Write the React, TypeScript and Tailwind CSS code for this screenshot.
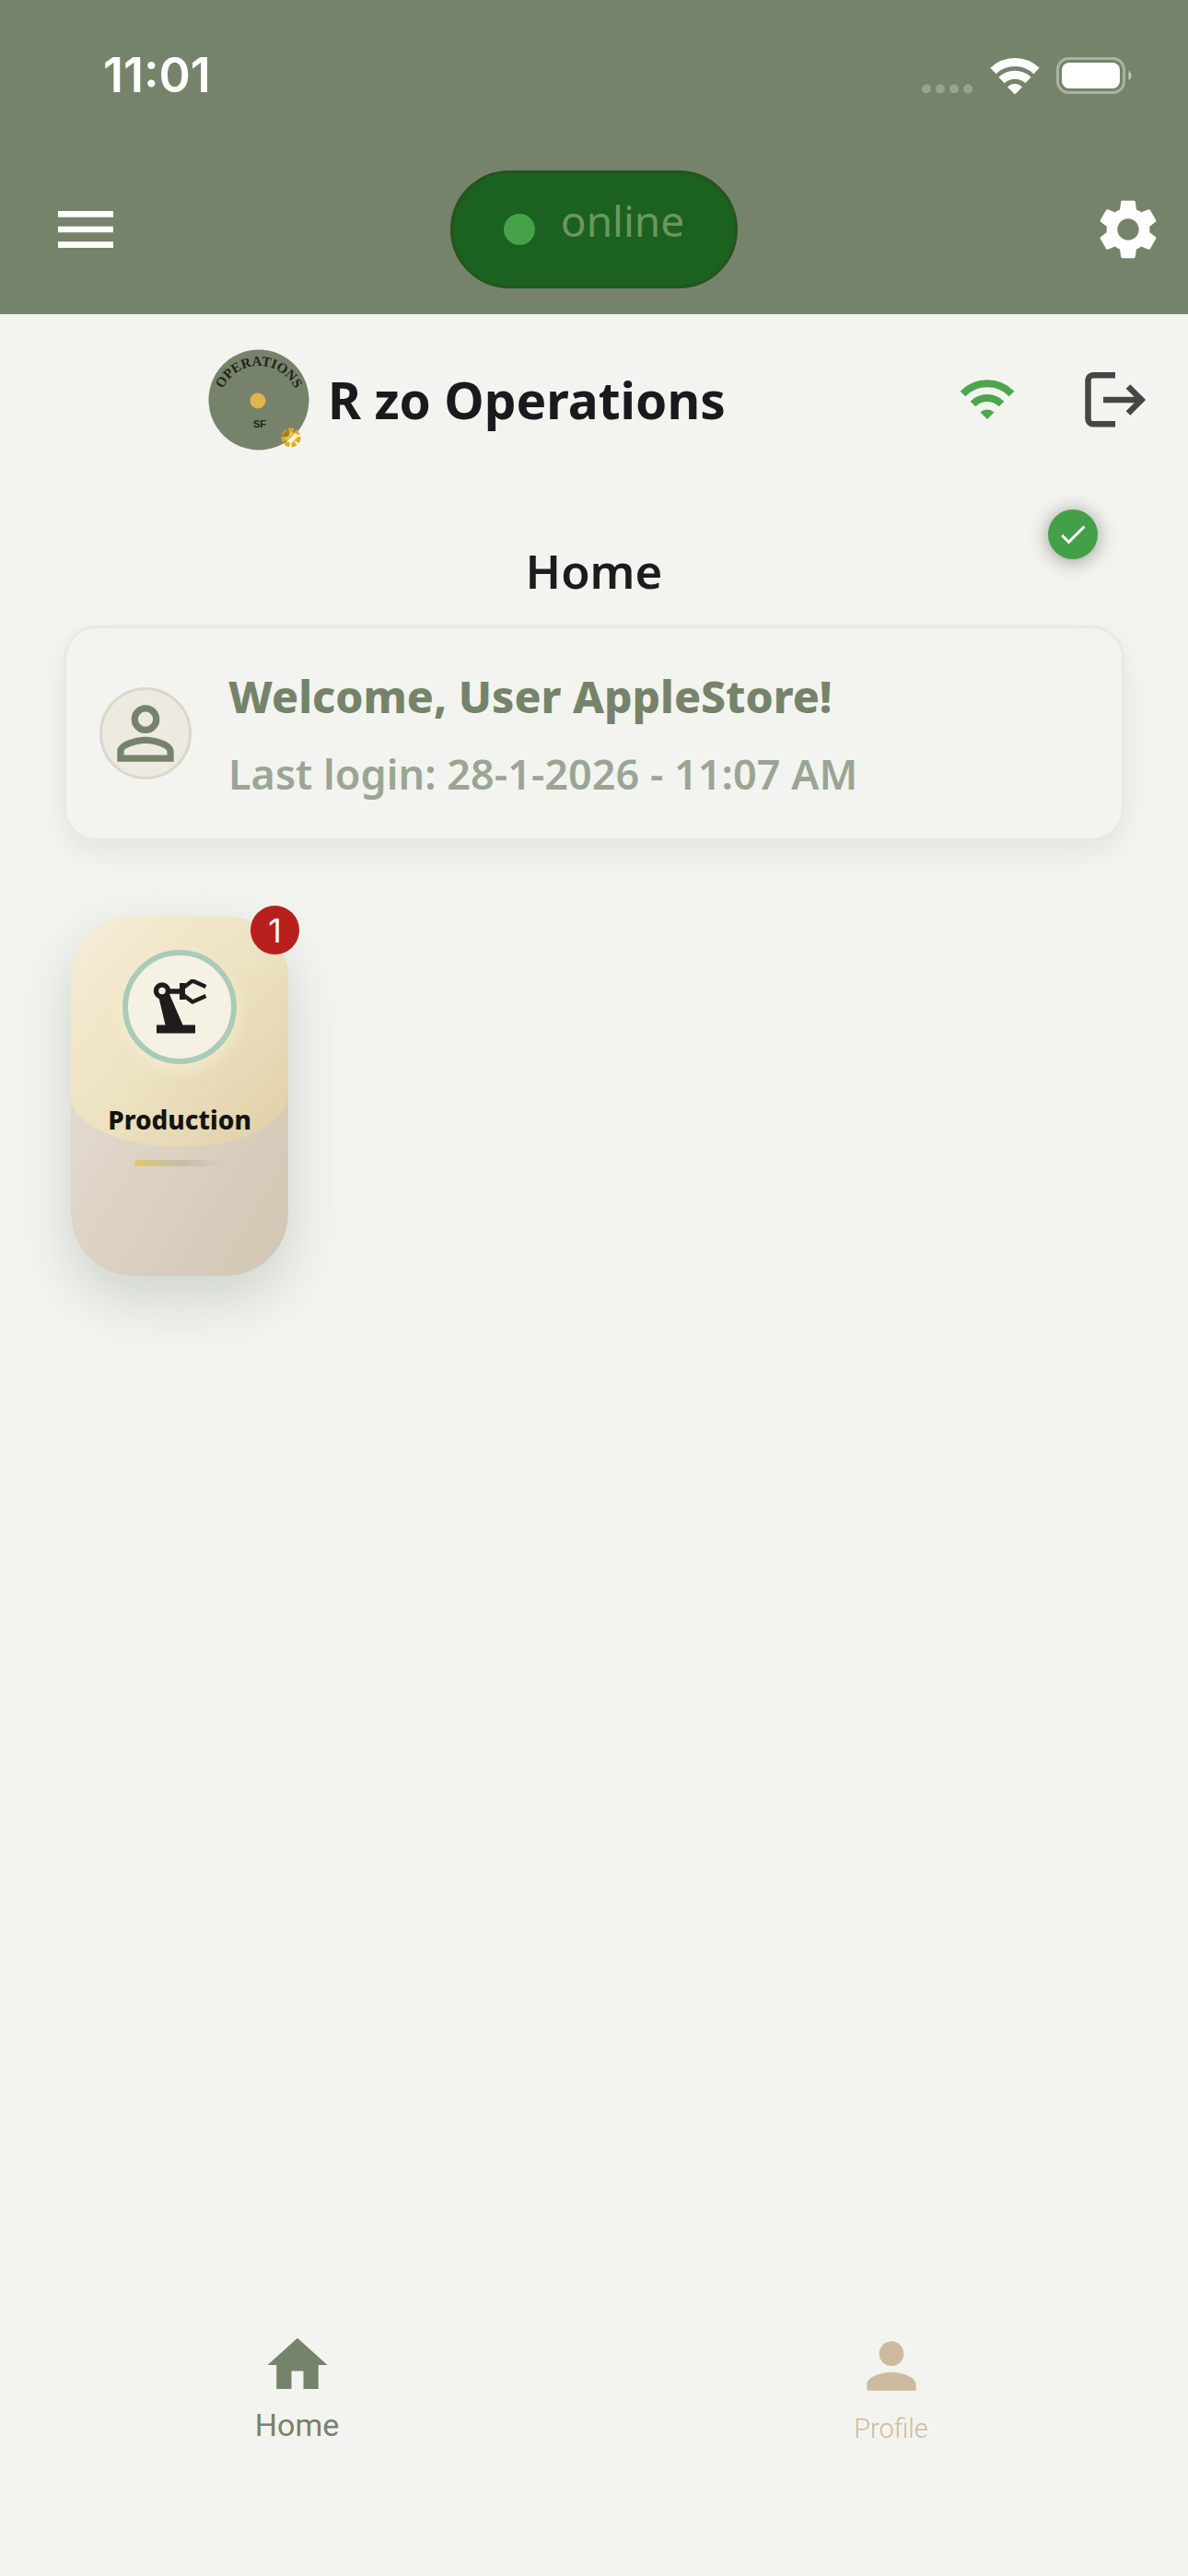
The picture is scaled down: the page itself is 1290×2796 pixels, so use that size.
import { MdCheck, MdHome, MdMenu, MdPerson, MdPersonOutline, MdSettings } from "react-icons/md";

const tiles = [{ title: "Production", badge: 1, icon: RobotArmIcon }];

function StatusBar() {
  return (
    <div className="flex h-[156px] items-center justify-between pt-2 pr-[58px] pl-28 text-white">
      <span className="font-['Inter',sans-serif] text-[52px] leading-none font-semibold">11:01</span>
      <div className="flex items-center gap-4">
        <svg viewBox="0 0 58 42" className="h-[42px] w-[58px]" fill="#97a28f" aria-hidden>
          <circle cx="6" cy="35.500" r="5" />
          <circle cx="21" cy="35.500" r="5" />
          <circle cx="36" cy="35.500" r="5" />
          <circle cx="51" cy="35.500" r="5" />
        </svg>
        <svg viewBox="0 0 56 42" className="h-[42px] w-14" fill="none" stroke="white" aria-hidden>
          <path d="M4.500 16A34 34 0 0 1 51.500 16" strokeWidth="9" />
          <path d="M13.500 26A21 21 0 0 1 42.500 26" strokeWidth="9" />
          <path d="M28 41.500 20 33.500A11 11 0 0 1 36 33.500Z" fill="white" stroke="none" />
        </svg>
        <svg viewBox="0 0 86 42" className="h-[42px] w-[86px]" fill="none" aria-hidden>
          <rect x="2.500" y="2.500" width="72" height="37" rx="12" stroke="#a9b3a2" strokeWidth="3" />
          <rect x="7" y="7" width="63" height="28" rx="8" fill="white" />
          <path d="M79.500 16c4 2 4 8 0 10z" fill="#c3cabd" />
        </svg>
      </div>
    </div>
  );
}

function Logo() {
  return (
    <svg viewBox="0 0 110 110" className="size-[110px]" role="img" aria-label="R zo Operations logo">
      <defs>
        <path id="logo-arc" d="M14 48A43 43 0 0 1 96 48" />
      </defs>
      <circle cx="55" cy="55" r="54.500" fill="#77826a" />
      <text fill="#20241c" fontFamily="Liberation Serif, serif" fontWeight="700" fontSize="15">
        <textPath href="#logo-arc" startOffset="50%" textAnchor="middle">
          OPERATIONS
        </textPath>
      </text>
      <circle cx="54" cy="56" r="8.500" fill="#e3b34c" />
      <text x="56" y="85" textAnchor="middle" fill="#20241c" fontFamily="Liberation Sans, sans-serif" fontWeight="700" fontSize="11">
        SF
      </text>
      <circle cx="90" cy="96" r="8" fill="none" stroke="#d9ae2b" strokeWidth="5" strokeDasharray="5 2" />
      <circle cx="90" cy="96" r="6" fill="#e6c04a" />
      <path d="M86 100l9-9 3 3-8 8z" fill="#fbf3d8" />
      <circle cx="85" cy="92" r="3" fill="#a77c12" />
    </svg>
  );
}

function WifiIcon() {
  return (
    <svg viewBox="0 0 60 44" className="h-11 w-15" fill="none" stroke="#4ba64e" strokeWidth="8" aria-hidden>
      <path d="M3.500 15.500A37 37 0 0 1 56.500 15.500" />
      <path d="M14.500 26.500A22 22 0 0 1 45.500 26.500" />
      <path d="M30 43 22.500 35.500A11 11 0 0 1 37.500 35.500Z" fill="#4ba64e" stroke="none" />
    </svg>
  );
}

function LogoutIcon() {
  return (
    <svg viewBox="0 0 80 80" className="size-20" fill="none" stroke="#464646" strokeWidth="6.500" aria-hidden>
      <path d="M41 13.300H17a5.500 5.500 0 0 0-5.500 5.500v42a5.500 5.500 0 0 0 5.500 5.500h24" />
      <path d="M28 40h43" />
      <path d="M55 25.500 69.500 40 55 54.500" />
    </svg>
  );
}

function RobotArmIcon() {
  return (
    <svg viewBox="15 23 60 60" className="size-15" fill="#1f1c1c" stroke="#1f1c1c" aria-hidden>
      <path d="M22 41 34 39 48.500 72.500H62V81.500H20V72.500H29.500Z" stroke="none" />
      <circle cx="26" cy="35.500" r="6.500" fill="#f5f1e3" strokeWidth="5.500" />
      <path d="M34 36H47" strokeWidth="5.500" />
      <path d="M45 27H51V45H45Z" stroke="none" />
      <path d="M49 32 59 24.500 73.500 31M49 40 59 47.500 73.500 41" fill="none" strokeWidth="4.500" />
    </svg>
  );
}

export default function App() {
  return (
    <div className="flex min-h-screen flex-col bg-[#f3f4ef] font-['Noto_Sans',sans-serif]">
      <header className="bg-[#76836b]">
        <StatusBar />
        <div className="grid h-[185px] grid-cols-3 items-center px-[26px] text-white">
          <button type="button" aria-label="Menu" className="ml-[27px] justify-self-start">
            <MdMenu className="size-20" />
          </button>
          <div className="flex h-32 w-[312px] items-center justify-center gap-7 justify-self-center rounded-full border-3 border-[#25541f] bg-[#1b611f]">
            <span className="size-[34px] rounded-full bg-[#45a249]" />
            <span className="pb-5 text-[46px] leading-[60px] text-[#6b965f]">online</span>
          </div>
          <button type="button" aria-label="Settings" className="justify-self-end">
            <MdSettings className="size-[78px]" />
          </button>
        </div>
      </header>

      <main className="relative flex flex-1 flex-col">
        <div className="flex h-[186px] items-center justify-between pr-10 pl-[226px]">
          <div className="flex items-center gap-5">
            <Logo />
            <h1 className="text-[55px] leading-[72px] font-bold text-[#1a1a1e]">R zo Operations</h1>
          </div>
          <div className="flex items-center gap-17">
            <WifiIcon />
            <button type="button" aria-label="Log out">
              <LogoutIcon />
            </button>
          </div>
        </div>

        <div className="absolute top-[212px] right-[98px] flex size-[54px] items-center justify-center rounded-full bg-[#43a047] shadow-[0_2px_20px_rgba(60,60,50,0.5)]">
          <MdCheck className="size-9 text-white" />
        </div>

        <h2 className="mt-14 text-center text-[51px] leading-[72px] font-semibold text-[#1c1c1e]">Home</h2>

        <section className="mx-[69px] mt-6 flex h-[234px] items-center gap-10 rounded-[36px] border-3 border-[#e8e9e2] px-9 shadow-[0_12px_28px_rgba(117,130,106,0.12)]">
          <div className="flex size-[100px] items-center justify-center rounded-full border-3 border-[#d9d8cd] bg-[#edeae1]">
            <MdPersonOutline className="size-[92px] shrink-0 text-[#76836b]" />
          </div>
          <div className="flex flex-col gap-4 pt-1">
            <p className="text-[48px] leading-[68px] font-extrabold text-[#76836b]">Welcome, User AppleStore!</p>
            <p className="text-[45px] leading-[68px] font-semibold text-[#9ba595]">Last login: 28-1-2026 - 11:07 AM</p>
          </div>
        </section>

        <div className="flex flex-wrap gap-10 px-[77px] pt-[82px]">
          {tiles.map((tile) => (
            <a key={tile.title} href="#production" className="relative">
              <div className="relative h-[390px] w-[236px] overflow-hidden rounded-[68px] bg-gradient-to-br from-[#eae2db] via-[#dcd3c4] to-[#d2c5b2] shadow-[0_24px_60px_rgba(90,115,100,0.25)]">
                <div className="absolute inset-x-0 top-0 h-[250px] rounded-b-[50%_56px] bg-gradient-to-br from-[#f6edd7] via-[#ede2c2] to-[#dfcfa7]" />
                <div className="relative flex flex-col items-center pt-9">
                  <div className="flex size-[124px] items-center justify-center rounded-full border-6 border-[#abcbb9] bg-[#f5f1e3] shadow-[0_6px_20px_rgba(255,250,225,0.5)]">
                    <tile.icon />
                  </div>
                  <p className="mt-10 text-[28px] leading-10 font-extrabold text-[#15130f]">{tile.title}</p>
                  <span className="mt-6 h-[7px] w-[98px] rounded-full bg-gradient-to-r from-[#dccb6c] via-[#c6bda6] to-transparent" />
                </div>
              </div>
              <span className="absolute -top-3 -right-3 flex size-[53px] items-center justify-center rounded-full bg-[#b8201e] font-['Inter',sans-serif] text-4xl text-white">
                {tile.badge}
              </span>
            </a>
          ))}
        </div>
      </main>

      <nav className="grid h-[306px] grid-cols-2 border-t-6 border-[#f1f2ed] pt-8 font-['Roboto',sans-serif]">
        <a href="#home" className="flex flex-col items-center text-[#76836b]">
          <MdHome className="size-[78px]" />
          <span className="mt-[6px] text-[34px] leading-10">Home</span>
        </a>
        <a href="#profile" className="flex flex-col items-center text-[#cebb9f]">
          <MdPerson className="size-20" />
          <span className="mt-2 text-[29px] leading-10 font-light">Profile</span>
        </a>
      </nav>
    </div>
  );
}
